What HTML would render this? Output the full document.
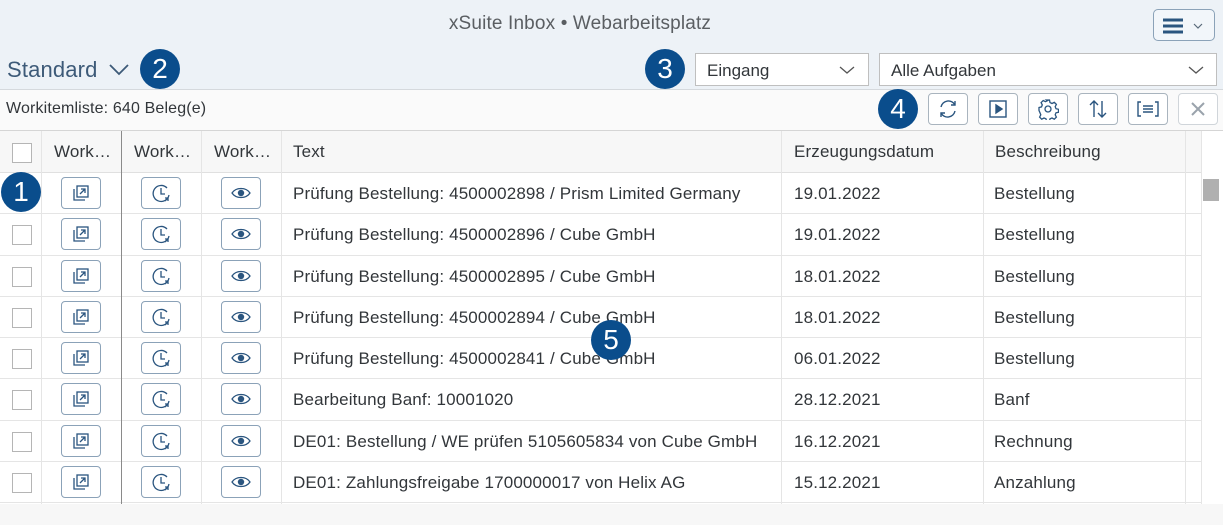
<!DOCTYPE html><html><head><style>
*{box-sizing:border-box;margin:0;padding:0}
body{width:1223px;height:525px;overflow:hidden;background:#f7f7f7;font-family:"Liberation Sans",sans-serif;color:#32363a;position:relative}
.a{position:absolute}
.top{left:0;top:0;width:1223px;height:90px;background:#edf2f7;border-bottom:1px solid #d5d9dd}
.strip{left:0;top:90px;width:1223px;height:40px;background:#fafafa}
.tbl{left:0;top:130px;width:1223px;height:374px;background:#fff;border-top:1px solid #d5d5d5}
.hdr{left:0;top:131px;width:1201px;height:42px;background:#f7f7f7;border-bottom:1px solid #e0e0e0}
.row{left:0;width:1201px;height:41.25px;border-bottom:1px solid #e5e5e5;background:#fff}
.vl{top:131px;width:1px;height:373px;background:#e5e5e5}
.badge{width:40px;height:40px;border-radius:50%;background:#0a4d8c;color:#fff;font-size:28px;text-align:center;line-height:40px}
.cb{width:20px;height:20px;border:1px solid #b5b5b5;background:#fff}
.ib{width:40px;height:32px;border:1px solid #8ba2b8;border-radius:4px;background:#fff;display:flex;align-items:center;justify-content:center}
.tb{width:40px;height:32px;border:1px solid #a9b4be;border-radius:4px;background:#fff;display:flex;align-items:center;justify-content:center}
.t{font-size:17px;white-space:nowrap;letter-spacing:0.15px}
.sel{height:33px;background:#fff;border:1px solid #bfbfbf;font-size:17px;padding:7px 11px}
</style></head><body>
<div class="a top"></div>
<div class="a t" style="left:0;width:1160px;top:13px;text-align:center;font-size:19px;color:#5a5e62">xSuite Inbox • Webarbeitsplatz</div>
<div class="a" style="left:1153px;top:9px;width:62px;height:32px;border:1px solid #8ba2b8;border-radius:5px;background:#f2f6fa">
<svg class="a" style="left:7px;top:7px" width="48" height="18"><g stroke="#2a557f" stroke-width="3"><line x1="2" y1="3" x2="22" y2="3"/><line x1="2" y1="9" x2="22" y2="9"/><line x1="2" y1="15" x2="22" y2="15"/></g><polyline points="33,7 37,11 41,7" fill="none" stroke="#5a6a7a" stroke-width="1.2"/></svg></div>
<div class="a t" style="left:7px;top:57px;font-size:22px;color:#3d5a78">Standard</div>
<svg class="a" style="left:108px;top:62px" width="24" height="16"><polyline points="2,3 11,12 20,3" fill="none" stroke="#3d5a78" stroke-width="1.8"/></svg>
<div class="a badge" style="left:140px;top:49px">2</div>
<div class="a badge" style="left:645px;top:49px">3</div>
<div class="a sel" style="left:695px;top:53px;width:174px">Eingang</div>
<svg class="a" style="left:838px;top:64px" width="18" height="12"><polyline points="2,3 9,9 16,3" fill="none" stroke="#555" stroke-width="1.3"/></svg>
<div class="a sel" style="left:879px;top:53px;width:338px">Alle Aufgaben</div>
<svg class="a" style="left:1187px;top:64px" width="18" height="12"><polyline points="2,3 9,9 16,3" fill="none" stroke="#555" stroke-width="1.3"/></svg>
<div class="a strip"></div>
<div class="a t" style="left:6px;top:100px;font-size:16px">Workitemliste: 640 Beleg(e)</div>
<div class="a badge" style="left:878px;top:89px">4</div>
<div class="a tb" style="left:928px;top:93px"><svg width="22" height="22" fill="none" stroke="#2a557f" stroke-width="1.4"><path d="M4 9a7.5 7.5 0 0 1 14-2M18 13a7.5 7.5 0 0 1-14 2"/><path d="M18 3v4h-4M4 19v-4h4"/></svg></div>
<div class="a tb" style="left:978px;top:93px"><svg width="20" height="20" fill="none" stroke="#2a557f" stroke-width="1.4"><rect x="2" y="2" width="16" height="16"/><path d="M8 6l6 4-6 4z" fill="#2a557f"/></svg></div>
<div class="a tb" style="left:1028px;top:93px"><svg width="22" height="22" fill="none" stroke="#2a557f" stroke-width="1.3"><circle cx="11" cy="11" r="3"/><path d="M9.5 2h3l.5 2.5 2 1 2.3-1.2 2.1 2.1-1.2 2.3.8 2 2.5.6v3l-2.5.5-.8 2 1.2 2.3-2.1 2.1-2.3-1.2-2 .8-.5 2.5h-3l-.5-2.5-2-.8-2.3 1.2-2.1-2.1 1.2-2.3-.8-2L2 12.5v-3l2.5-.6.8-2-1.2-2.3 2.1-2.1 2.3 1.2 2-1z"/></svg></div>
<div class="a tb" style="left:1078px;top:93px"><svg width="22" height="22" fill="none" stroke="#2a557f" stroke-width="1.4"><path d="M7 19V3M3 7l4-4 4 4M15 3v16M11 15l4 4 4-4"/></svg></div>
<div class="a tb" style="left:1128px;top:93px"><svg width="24" height="18" fill="none" stroke="#2a557f" stroke-width="1.4"><path d="M5 2H2v14h3M19 2h3v14h-3M7 6h10M7 9h10M7 12h10"/></svg></div>
<div class="a tb" style="left:1178px;top:93px;border-color:#d0d5da"><svg width="16" height="16" stroke="#9aa3ac" stroke-width="2"><path d="M2 2l12 12M14 2L2 14"/></svg></div>
<div class="a tbl"></div>
<div class="a hdr"></div>
<div class="a cb" style="left:12px;top:143px"></div>
<div class="a t" style="left:54px;top:142px">Work…</div>
<div class="a t" style="left:134px;top:142px">Work…</div>
<div class="a t" style="left:214px;top:142px">Work…</div>
<div class="a t" style="left:293px;top:142px">Text</div>
<div class="a t" style="left:794px;top:142px">Erzeugungsdatum</div>
<div class="a t" style="left:995px;top:142px">Beschreibung</div>
<div id="rows"></div>
<div class="a vl" style="left:41px"></div>
<div class="a vl" style="left:121px;background:#8a8a8a;width:1px"></div>
<div class="a vl" style="left:201px"></div>
<div class="a vl" style="left:281px"></div>
<div class="a vl" style="left:781px"></div>
<div class="a vl" style="left:983px"></div>
<div class="a vl" style="left:1185px"></div>
<div class="a" style="left:1201px;top:131px;width:22px;height:373px;background:#fff;border-left:1px solid #e5e5e5"></div>
<div class="a" style="left:1203px;top:179px;width:16px;height:22px;background:#b0b0b0"></div>
<div class="a badge" style="left:1px;top:172px">1</div>
<div class="a badge" style="left:591px;top:320px">5</div>
<script>
var d=[["Prüfung Bestellung: 4500002898 / Prism Limited Germany","19.01.2022","Bestellung"],["Prüfung Bestellung: 4500002896 / Cube GmbH","19.01.2022","Bestellung"],["Prüfung Bestellung: 4500002895 / Cube GmbH","18.01.2022","Bestellung"],["Prüfung Bestellung: 4500002894 / Cube GmbH","18.01.2022","Bestellung"],["Prüfung Bestellung: 4500002841 / Cube GmbH","06.01.2022","Bestellung"],["Bearbeitung Banf: 10001020","28.12.2021","Banf"],["DE01: Bestellung / WE prüfen 5105605834 von Cube GmbH","16.12.2021","Rechnung"],["DE01: Zahlungsfreigabe 1700000017 von Helix AG","15.12.2021","Anzahlung"]];
var i1='<svg width="20" height="20" fill="none" stroke="#2a557f" stroke-width="1.3"><path d="M3 6v11h11"/><rect x="6" y="3" width="11" height="11"/><path d="M9 11l5-5M10 6h4v4"/></svg>';
var i2='<svg width="22" height="22" fill="none" stroke="#2a557f" stroke-width="1.3"><path d="M17 6A8 8 0 1 0 19 13"/><path d="M11 6v6h4M15 19l3-3M18 19v-3h-3"/></svg>';
var i3='<svg width="20" height="14"><path d="M1 7C5 1 15 1 19 7C15 13 5 13 1 7z" fill="none" stroke="#2a557f" stroke-width="1.3"/><circle cx="10" cy="7" r="3.2" fill="#2a557f"/></svg>';
var h='';d.forEach(function(r,i){var y=173+i*41.25;
h+='<div class="a row" style="top:'+y+'px"></div>';
if(i>0)h+='<div class="a cb" style="left:12px;top:'+(y+11)+'px"></div>';
h+='<div class="a ib" style="left:61px;top:'+(y+4)+'px">'+i1+'</div><div class="a ib" style="left:141px;top:'+(y+4)+'px">'+i2+'</div><div class="a ib" style="left:221px;top:'+(y+4)+'px">'+i3+'</div>';
h+='<div class="a t" style="left:293px;top:'+(y+11)+'px">'+r[0]+'</div><div class="a t" style="left:794px;top:'+(y+11)+'px">'+r[1]+'</div><div class="a t" style="left:994px;top:'+(y+11)+'px">'+r[2]+'</div>';});
document.getElementById('rows').innerHTML=h;
</script>
</body></html>
